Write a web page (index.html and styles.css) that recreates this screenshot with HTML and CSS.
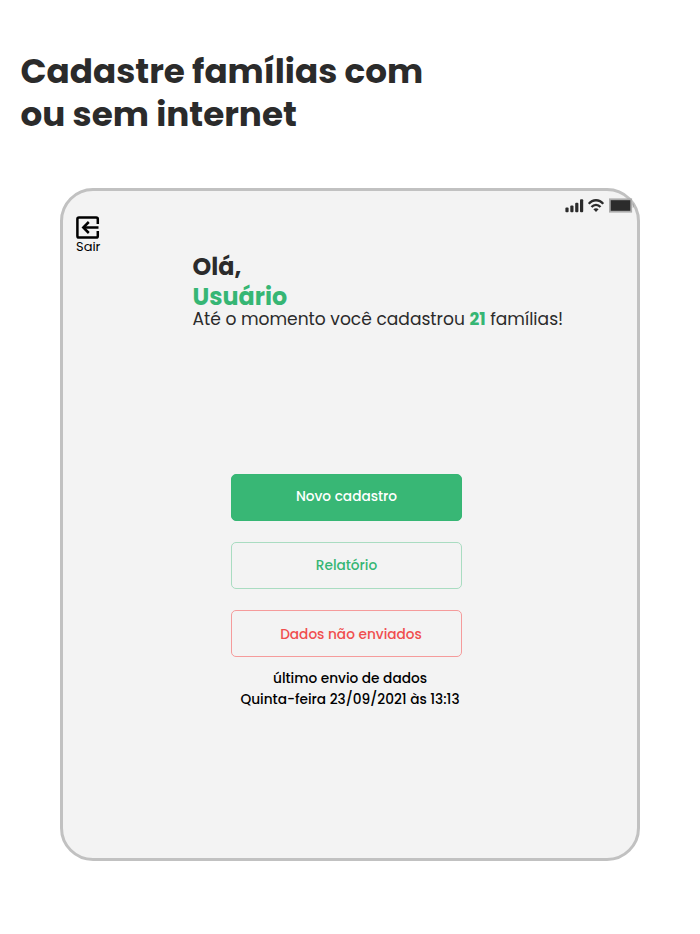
FILE: index.html
```html
<!DOCTYPE html>
<html lang="pt-BR">
<head>
  <meta charset="UTF-8">
  <title>Cadastro de famílias</title>
  <link rel="stylesheet" href="styles.css">
</head>
<body>

  <h1>Cadastre famílias com<br>ou sem internet</h1>

  <main class="tablet">
    <div class="status-bar">
      <svg class="signal" width="19" height="15" viewBox="0 0 19 15" fill="#2b2b2b">
        <rect x="0.4" y="9.6" width="3.2" height="4.7" rx="1"/>
        <rect x="5.3" y="7.4" width="3.2" height="6.9" rx="1"/>
        <rect x="10.2" y="4.7" width="3.2" height="9.6" rx="1"/>
        <rect x="15" y="1.2" width="3.2" height="13.1" rx="1"/>
      </svg>
      <svg class="wifi" width="16" height="15" viewBox="0 0 16 15" fill="none" stroke="#2b2b2b" stroke-width="2.3">
        <path d="M0.8 5.9C4.7 1 11.3 1 15.2 5.9"/>
        <path d="M3.5 9C6 6.1 10 6.1 12.5 9"/>
        <path d="M8 14L5.4 11.3C6.8 9.8 9.2 9.8 10.6 11.3Z" fill="#2b2b2b" stroke="none"/>
      </svg>
      <svg class="battery" width="26" height="15" viewBox="0 0 26 15">
        <rect x="0.8" y="1.3" width="21.4" height="12.4" fill="#2b2b2b" stroke="#ababab" stroke-width="1.8"/>
        <path d="M23.7 5V10C25.7 9 25.7 6 23.7 5Z" fill="#ababab"/>
      </svg>
    </div>

    <a class="logout">
      <svg width="24" height="24" viewBox="0 0 24 24" fill="none" stroke="#000" stroke-width="2.5">
        <path d="M21.8 8V3Q21.8 1.4 20.2 1.4H3Q1.4 1.4 1.4 3V20Q1.4 21.6 3 21.6H20.2Q21.8 21.6 21.8 20V15"/>
        <path d="M22.5 11.5H8"/>
        <path d="M12.8 6L7.3 11.5L12.8 17"/>
      </svg>
      <span>Sair</span>
    </a>

    <section class="welcome">
      <h2>Olá,</h2>
      <h2 class="user">Usuário</h2>
      <p>Até o momento você cadastrou <strong>21</strong> famílias!</p>
    </section>

    <section class="actions">
      <button class="btn new">Novo cadastro</button>
      <button class="btn report">Relatório</button>
      <button class="btn pending">Dados não enviados</button>
      <p class="last-sync">último envio de dados<br>Quinta-feira 23/09/2021 às 13:13</p>
    </section>
  </main>

</body>
</html>
```
FILE: styles.css
```css
* {
  box-sizing: border-box;
}
body {
  margin: 0;
  padding: 50px 60px 0;
  font-family: 'Poppins', 'Inter', sans-serif;
  color: #2b2b2b;
  background-color: #fff;
}
h1 {
  margin: 0 0 52px -39.5px;
  font-size: 34.2px;
  line-height: 43px;
  white-space: nowrap;
}
.tablet {
  height: 673px;
  padding: 7px 0 0;
  border: 3px solid #c1c1c1;
  border-radius: 33px;
  background-color: #f3f3f3;
}
.status-bar {
  display: flex;
  height: 15px;
  margin-left: 502px;
}
.wifi {
  margin-left: 4px;
}
.battery {
  margin-left: 5px;
}
.logout {
  display: block;
  width: 40px;
  margin: 3px 0 0 13px;
  color: #000;
  font-size: 13px;
  line-height: 14px;
}
.logout svg {
  display: block;
}
.welcome {
  margin: -2px 0 0 129.5px;
}
h2 {
  margin: 0;
  font-size: 23.8px;
  line-height: 30px;
}
.user {
  color: #36b674;
}
.welcome p {
  margin: -4px 0 0;
  font-size: 17.1px;
  line-height: 22px;
  white-space: nowrap;
}
.welcome strong {
  color: #36b674;
}
.actions {
  width: 231px;
  margin: 144px 0 0 168px;
}
.btn {
  display: block;
  width: 100%;
  height: 47px;
  margin: 0 0 21px;
  padding: 0;
  border: 1px solid #36b674;
  border-radius: 5px;
  background: none;
  color: #36b674;
  font-family: inherit;
  font-size: 13.7px;
  font-weight: 500;
}
.btn.new {
  padding-bottom: 1px;
  background-color: #38b775;
  color: #fff;
}
.btn.report {
  border-color: #a9dcc1;
}
.btn.pending {
  margin-bottom: 12px;
  padding: 2px 0 0 9px;
  border-color: #f59b9b;
  color: #f04e4e;
}
.last-sync {
  margin: 0 -13px 0 -6px;
  color: #000;
  font-size: 13.7px;
  font-weight: 500;
  line-height: 20.5px;
  text-align: center;
}
```
